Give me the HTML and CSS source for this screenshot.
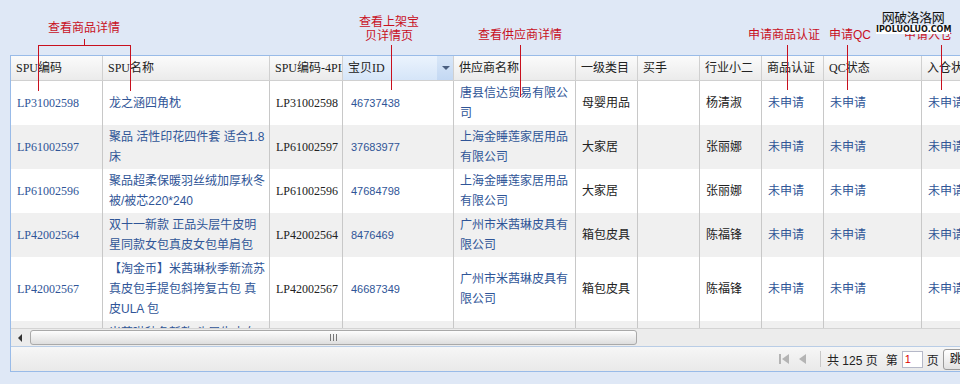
FILE: index.html
```html
<!DOCTYPE html>
<html lang="zh-CN">
<head>
    <meta charset="UTF-8">
    <title>SPU列表</title>
    <link rel="stylesheet" href="styles.css">
</head>
<body>
    <div class="page">
        <div class="grid-panel">
            <div class="row grid-head">
                <div class="hd">SPU编码</div>
                <div class="hd">SPU名称</div>
                <div class="hd">SPU编码-4PL</div>
                <div class="hd sorted">宝贝ID<span class="trigger"></span></div>
                <div class="hd">供应商名称</div>
                <div class="hd">一级类目</div>
                <div class="hd">买手</div>
                <div class="hd">行业小二</div>
                <div class="hd">商品认证</div>
                <div class="hd">QC状态</div>
                <div class="hd">入仓状态</div>
            </div>

            <div class="grid-body">
                <div class="row">
                    <div class="cell code link">LP31002598</div>
                    <div class="cell link">龙之涵四角枕</div>
                    <div class="cell code">LP31002598</div>
                    <div class="cell num link">46737438</div>
                    <div class="cell link">唐县信达贸易有限公司</div>
                    <div class="cell">母婴用品</div>
                    <div class="cell"></div>
                    <div class="cell">杨清淑</div>
                    <div class="cell link">未申请</div>
                    <div class="cell link">未申请</div>
                    <div class="cell link">未申请</div>
                </div>
                <div class="row alt">
                    <div class="cell code link">LP61002597</div>
                    <div class="cell link">聚品 活性印花四件套 适合1.8床</div>
                    <div class="cell code">LP61002597</div>
                    <div class="cell num link">37683977</div>
                    <div class="cell link">上海金睡莲家居用品有限公司</div>
                    <div class="cell">大家居</div>
                    <div class="cell"></div>
                    <div class="cell">张丽娜</div>
                    <div class="cell link">未申请</div>
                    <div class="cell link">未申请</div>
                    <div class="cell link">未申请</div>
                </div>
                <div class="row">
                    <div class="cell code link">LP61002596</div>
                    <div class="cell link">聚品超柔保暖羽丝绒加厚秋冬被/被芯220*240</div>
                    <div class="cell code">LP61002596</div>
                    <div class="cell num link">47684798</div>
                    <div class="cell link">上海金睡莲家居用品有限公司</div>
                    <div class="cell">大家居</div>
                    <div class="cell"></div>
                    <div class="cell">张丽娜</div>
                    <div class="cell link">未申请</div>
                    <div class="cell link">未申请</div>
                    <div class="cell link">未申请</div>
                </div>
                <div class="row alt">
                    <div class="cell code link">LP42002564</div>
                    <div class="cell link">双十一新款 正品头层牛皮明星同款女包真皮女包单肩包</div>
                    <div class="cell code">LP42002564</div>
                    <div class="cell num link">8476469</div>
                    <div class="cell link">广州市米茜琳皮具有限公司</div>
                    <div class="cell">箱包皮具</div>
                    <div class="cell"></div>
                    <div class="cell">陈福锋</div>
                    <div class="cell link">未申请</div>
                    <div class="cell link">未申请</div>
                    <div class="cell link">未申请</div>
                </div>
                <div class="row">
                    <div class="cell code link">LP42002567</div>
                    <div class="cell link">【淘金币】米茜琳秋季新流苏真皮包手提包斜挎复古包 真皮ULA 包</div>
                    <div class="cell code">LP42002567</div>
                    <div class="cell num link">46687349</div>
                    <div class="cell link">广州市米茜琳皮具有限公司</div>
                    <div class="cell">箱包皮具</div>
                    <div class="cell"></div>
                    <div class="cell">陈福锋</div>
                    <div class="cell link">未申请</div>
                    <div class="cell link">未申请</div>
                    <div class="cell link">未申请</div>
                </div>
                <div class="row alt">
                    <div class="cell code link">LP42002570</div>
                    <div class="cell link">米茜琳秋冬新款 头层牛皮女包欧美时尚手提包斜挎包 真皮女包</div>
                    <div class="cell code">LP42002570</div>
                    <div class="cell num link">46690211</div>
                    <div class="cell link">广州市米茜琳皮具有限公司</div>
                    <div class="cell">箱包皮具</div>
                    <div class="cell"></div>
                    <div class="cell">陈福锋</div>
                    <div class="cell link">已认证<br>申请中</div>
                    <div class="cell link">未申请</div>
                    <div class="cell link">未申请</div>
                </div>
            </div>

            <div class="hscroll">
                <span class="sb-btn">
                    <svg width="6" height="8" viewBox="0 0 6 8"><path d="M5 0 L1 4 L5 8 Z" fill="#333"/></svg>
                </span>
                <span class="sb-thumb"><span class="grip"></span></span>
            </div>

            <div class="pager">
                <span class="pg-icon">
                    <svg width="14" height="14" viewBox="0 0 14 14"><rect x="2" y="2" width="2" height="10" fill="#b4b4b4"/><path d="M12 2 L5 7 L12 12 Z" fill="#b4b4b4"/></svg>
                </span>
                <span class="pg-icon">
                    <svg width="14" height="14" viewBox="0 0 14 14"><path d="M10 2 L3 7 L10 12 Z" fill="#b4b4b4"/></svg>
                </span>
                <span class="pg-sep"></span>
                <span class="pg-text wide">共 125 页</span>
                <span class="pg-text">第</span>
                <span class="pg-input">1</span>
                <span class="pg-text">页</span>
                <span class="pg-btn">跳转</span>
            </div>
        </div>

        <!-- 说明标注 -->
        <div class="note" style="left:48px; top:21px;">查看商品详情</div>
        <div class="bracket"></div>
        <div class="note center" style="left:359px; top:15px;">查看上架宝<br>贝详情页</div>
        <div class="note" style="left:478px; top:28px;">查看供应商详情</div>
        <div class="note" style="left:748px; top:28px;">申请商品认证</div>
        <div class="note" style="left:829px; top:28px;">申请QC</div>
        <div class="note" style="left:904px; top:28px;">申请入仓</div>

        <span class="vline" style="left:391px; height:45px;"></span>
        <span class="vline" style="left:520px; height:52px;"></span>
        <span class="vline" style="left:787px; height:45px;"></span>
        <span class="vline" style="left:847px; height:45px;"></span>
        <span class="vline" style="left:941px; height:45px;"></span>

        <div class="watermark">
            <div class="wm-cn">网破洛洛网</div>
            <div class="wm-en">IPOLUOLUO.COM</div>
        </div>
    </div>
</body>
</html>
```

FILE: styles.css
```css
body {
    margin: 0;
    background-color: #dfe8f6;
    font-family: "Liberation Sans", "Noto Sans CJK SC", sans-serif;
    font-size: 12px;
    color: #222;
}
.page {
    position: relative;
    height: 384px;
    overflow: hidden;
    padding: 55px 0 0 10px;
    box-sizing: border-box;
}
.grid-panel {
    width: 1011px;
    border: 1px solid #99bbe8;
    border-right: none;
    background-color: #fff;
}
.row {
    display: grid;
    grid-template-columns: 92px 167px 73px 111px 122px 62px 62px 62px 62px 98px 100px;
}
.grid-head {
    height: 24px;
    border-bottom: 1px solid #d0d0d0;
    background: linear-gradient(#fbfbfb, #ebebeb);
}
.hd {
    position: relative;
    padding: 0 0 0 5px;
    line-height: 24px;
    border-right: 1px solid #d0d0d0;
    white-space: nowrap;
    overflow: hidden;
    font-family: "Liberation Serif", "Noto Sans CJK SC", serif;
    color: #222;
}
.hd.sorted {
    background: linear-gradient(#ebf3fd, #d5e5f8);
}
.trigger {
    position: absolute;
    right: 0;
    top: 0;
    width: 16px;
    height: 24px;
    background: linear-gradient(#d9e7f8, #c3d8f3);
}
.trigger::after {
    content: "";
    position: absolute;
    left: 5px;
    top: 10px;
    border-left: 4px solid transparent;
    border-right: 4px solid transparent;
    border-top: 4px solid #4a5f80;
}
.grid-body {
    height: 247px;
    overflow: hidden;
}
.row.alt {
    background-color: #f0f0f0;
}
.cell {
    display: flex;
    align-items: center;
    padding: 2px 3px 2px 6px;
    line-height: 20px;
    border-right: 1px solid #c8c8c8;
    word-break: break-all;
    min-width: 0;
}
.link {
    color: #2f5597;
}
.code {
    font-family: "Liberation Serif", "Noto Sans CJK SC", serif;
}
.num {
    font-size: 11px;
    padding-left: 8px;
}
.hscroll {
    display: flex;
    height: 18px;
    box-sizing: border-box;
    border-top: 1px solid #d4d4d4;
    background-color: #ececec;
    padding: 1px 0;
}
.sb-btn {
    width: 17px;
    display: flex;
    align-items: center;
    justify-content: center;
}
.sb-thumb {
    width: 605px;
    margin-left: 2px;
    border: 1px solid #a9a9a9;
    border-radius: 3px;
    background: linear-gradient(#fdfdfd, #dedede);
    display: flex;
    align-items: center;
    justify-content: center;
}
.grip {
    width: 7px;
    height: 7px;
    background: repeating-linear-gradient(90deg, #777 0 1px, transparent 1px 3px);
}
.pager {
    display: flex;
    align-items: center;
    height: 24px;
    border-top: 1px solid #b9cde6;
    background: linear-gradient(#f6f6f6, #e9e9e9);
    padding-left: 766px;
}
.pg-icon {
    display: flex;
    margin-right: 5px;
}
.pg-sep {
    width: 1px;
    height: 16px;
    background-color: #c8c8c8;
    margin: 0 6px 0 5px;
}
.pg-text {
    font-size: 12px;
    color: #222;
    margin-right: 4px;
}
.pg-text.wide {
    margin-right: 8px;
}
.pg-input {
    width: 17px;
    height: 15px;
    line-height: 15px;
    padding-left: 2px;
    margin-right: 4px;
    border: 1px solid #b5b8c8;
    background-color: #fff;
    color: #d00;
    font-size: 11px;
}
.pg-btn {
    padding: 0 6px;
    height: 19px;
    line-height: 19px;
    border: 1px solid #9a9a9a;
    border-radius: 3px;
    background: linear-gradient(#ffffff, #e2e2e2);
    color: #111;
    white-space: nowrap;
}
.note {
    position: absolute;
    font-size: 12px;
    line-height: 14px;
    color: #c8101e;
    white-space: nowrap;
}
.note.center {
    width: 60px;
    text-align: center;
}
.bracket {
    position: absolute;
    left: 38px;
    top: 45px;
    width: 91px;
    height: 45px;
    border: 1px solid #c8101e;
    border-bottom: none;
}
.bracket::before {
    content: "";
    position: absolute;
    left: 45px;
    top: -7px;
    width: 1px;
    height: 6px;
    background-color: #c8101e;
}
.vline {
    position: absolute;
    top: 45px;
    width: 1px;
    background-color: #c8101e;
}
.watermark {
    position: absolute;
    left: 876px;
    top: 9px;
    width: 74px;
    text-align: center;
}
.wm-cn {
    font-family: "Noto Sans CJK SC", sans-serif;
    font-size: 13px;
    line-height: 16px;
    color: #111;
    letter-spacing: -0.5px;
}
.wm-en {
    margin-top: 1px;
    font-family: "DejaVu Sans", sans-serif;
    font-size: 8px;
    font-weight: bold;
    line-height: 8px;
    background-color: #fff;
    color: #111;
}
```
